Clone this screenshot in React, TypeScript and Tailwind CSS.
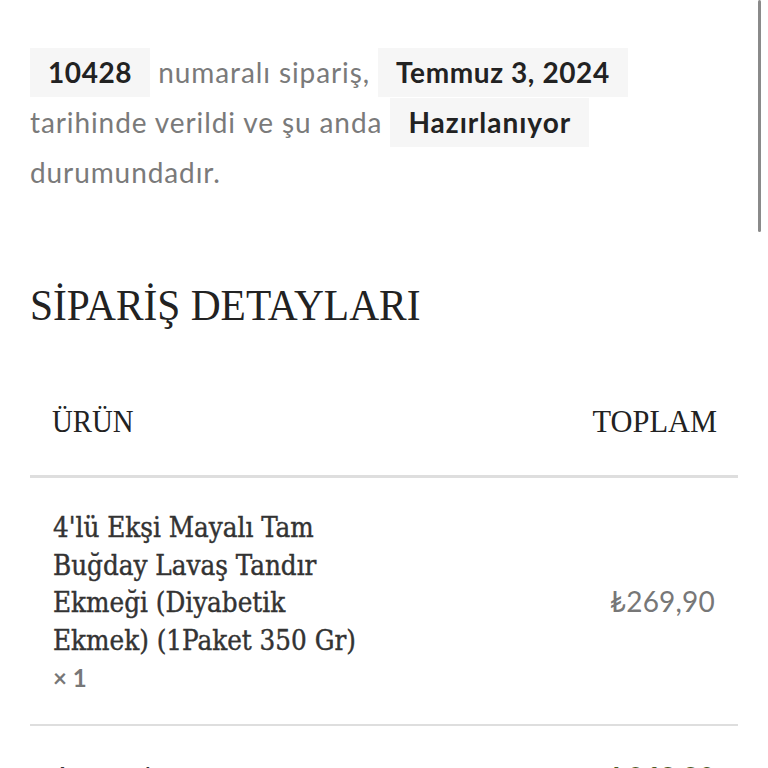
export default function App() {
  const chip = 'inline-block bg-[#f6f6f6] px-[18px] font-bold tracking-[0.6px] text-[#222] leading-[49px]';

  return (
    <div className="relative min-h-screen bg-white font-['Lato','Noto_Sans',sans-serif]">
      {/* overlay scrollbar */}
      <div className="absolute right-[7px] top-0 h-[232px] w-[3px] rounded-full bg-[#8a8a8a]" />

      <div className="px-[30px] pt-[47px]">
        <p className="text-[28px] leading-[50px] tracking-[0.9px] text-[#7a7a7a]">
          <mark className={chip}>10428</mark> numaralı sipariş, <mark className={chip}>Temmuz 3, 2024</mark>{' '}
          tarihinde verildi ve şu anda <mark className={`${chip} tracking-[1px]`}>Hazırlanıyor</mark> durumundadır.
        </p>

        <h2 className="mt-[80px] origin-left scale-x-[0.92] font-['Liberation_Serif',serif] text-[45px] leading-[56px] text-[#222]">
          SİPARİŞ DETAYLARI
        </h2>

        <table className="mt-[58px] w-full border-collapse">
          <thead>
            <tr className="border-b-[3px] border-[#dedede]">
              <th className="px-[22px] pb-[30px] pt-[6px] text-left font-['Liberation_Serif',serif] text-[32px] font-normal text-[#222]">
                <span className="inline-block origin-left scale-x-[0.9]">ÜRÜN</span>
              </th>
              <th className="px-[21px] pb-[30px] pt-[6px] text-right font-['Liberation_Serif',serif] text-[32px] font-normal text-[#222]">
                <span className="inline-block origin-right scale-x-[0.95]">TOPLAM</span>
              </th>
            </tr>
          </thead>
          <tbody>
            <tr className="border-b-2 border-[#dedede]">
              <td className="px-[23px] pb-[28px] pt-[31px] align-middle">
                <div className="font-['DejaVu_Serif_Condensed','DejaVu_Serif',serif] text-[27.5px] leading-[37.5px] text-[#333] [-webkit-text-stroke:0.4px_#333]">
                  4'lü Ekşi Mayalı Tam
                  <br />
                  Buğday Lavaş Tandır
                  <br />
                  Ekmeği (Diyabetik
                  <br />
                  Ekmek) (1Paket 350 Gr)
                </div>
                <div className="text-[24px] font-bold leading-[37px] text-[#777]">× 1</div>
              </td>
              <td className="px-[23px] text-right align-middle text-[28px] tracking-[0.2px] text-[#777]">₺269,90</td>
            </tr>
            <tr>
              <td className="px-[23px] pt-[30px] text-[28px] text-[#333]">Ara toplam:</td>
              <td className="px-[23px] pt-[30px] text-right text-[28px] font-bold text-[#4d5a1e]">₺269,90</td>
            </tr>
          </tbody>
        </table>
      </div>
    </div>
  );
}
